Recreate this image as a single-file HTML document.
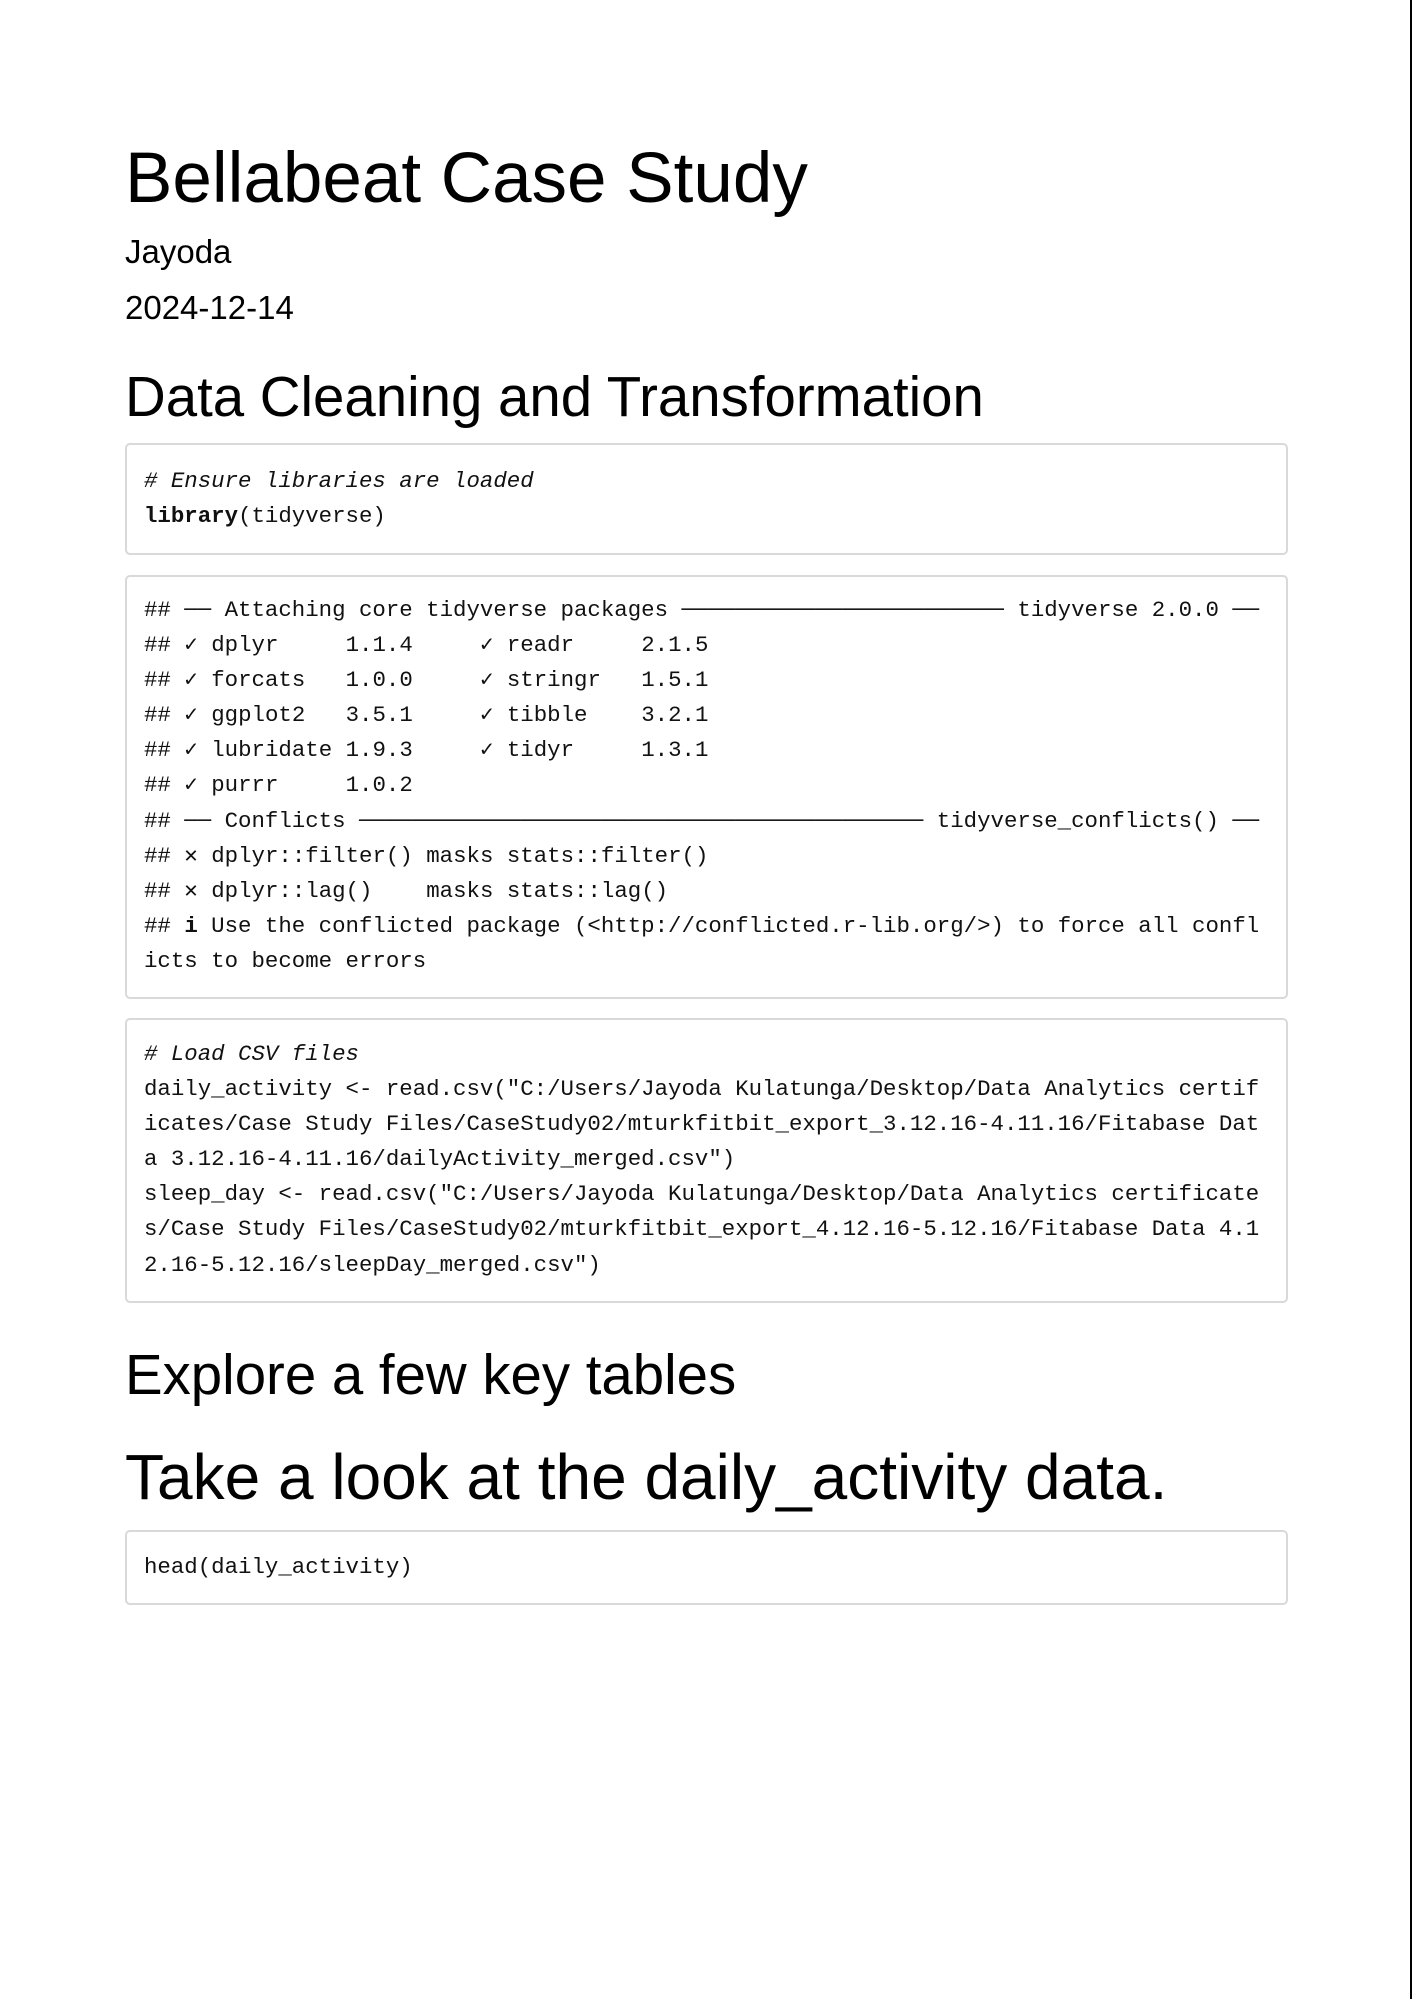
<!DOCTYPE html>
<html><head><meta charset="utf-8">
<style>
html,body{margin:0;padding:0;background:#fff;}
body{width:1412px;height:1999px;position:relative;overflow:hidden;font-family:"Liberation Sans",Arial,sans-serif;color:#000;}
.edge{position:absolute;right:0;top:0;width:2px;height:1999px;background:#000;}
.t{position:absolute;left:125px;margin:0;white-space:nowrap;font-weight:normal;line-height:1;}
.box{position:absolute;left:125px;width:1163px;border:2px solid #d9d9d9;border-radius:5px;box-sizing:border-box;background:#fff;}
pre{margin:0;font-family:"Liberation Mono","DejaVu Sans Mono",monospace;font-size:22.4px;line-height:35.1px;color:#111;padding-left:17px;}
i{font-style:italic;}
b{font-weight:bold;}
</style></head><body>
<div class="edge"></div>
<div class="t" style="top:143px;font-size:71px;">Bellabeat Case Study</div>
<div class="t" style="top:235px;font-size:33px;">Jayoda</div>
<div class="t" style="top:291px;font-size:33px;">2024-12-14</div>
<div class="t" style="top:369px;font-size:56.4px;">Data Cleaning and Transformation</div>

<div class="box" style="top:443px;height:112px;"><pre style="padding-top:19px;"><i># Ensure libraries are loaded</i>
<b>library</b>(tidyverse)</pre></div>

<div class="box" style="top:575px;height:424px;"><pre style="padding-top:16px;">## ── Attaching core tidyverse packages ──────────────────────── tidyverse 2.0.0 ──
## ✓ dplyr     1.1.4     ✓ readr     2.1.5
## ✓ forcats   1.0.0     ✓ stringr   1.5.1
## ✓ ggplot2   3.5.1     ✓ tibble    3.2.1
## ✓ lubridate 1.9.3     ✓ tidyr     1.3.1
## ✓ purrr     1.0.2     
## ── Conflicts ────────────────────────────────────────── tidyverse_conflicts() ──
## ✕ dplyr::filter() masks stats::filter()
## ✕ dplyr::lag()    masks stats::lag()
## <b>i</b> Use the conflicted package (&lt;http://conflicted.r-lib.org/&gt;) to force all confl
icts to become errors</pre></div>

<div class="box" style="top:1018px;height:285px;"><pre style="padding-top:17px;"><i># Load CSV files</i>
daily_activity &lt;- read.csv("C:/Users/Jayoda Kulatunga/Desktop/Data Analytics certif
icates/Case Study Files/CaseStudy02/mturkfitbit_export_3.12.16-4.11.16/Fitabase Dat
a 3.12.16-4.11.16/dailyActivity_merged.csv")
sleep_day &lt;- read.csv("C:/Users/Jayoda Kulatunga/Desktop/Data Analytics certificate
s/Case Study Files/CaseStudy02/mturkfitbit_export_4.12.16-5.12.16/Fitabase Data 4.1
2.16-5.12.16/sleepDay_merged.csv")</pre></div>

<div class="t" style="top:1347px;font-size:56.4px;">Explore a few key tables</div>
<div class="t" style="top:1445px;font-size:64px;">Take a look at the daily_activity data.</div>

<div class="box" style="top:1530px;height:75px;"><pre style="padding-top:18px;">head(daily_activity)</pre></div>
</body></html>
